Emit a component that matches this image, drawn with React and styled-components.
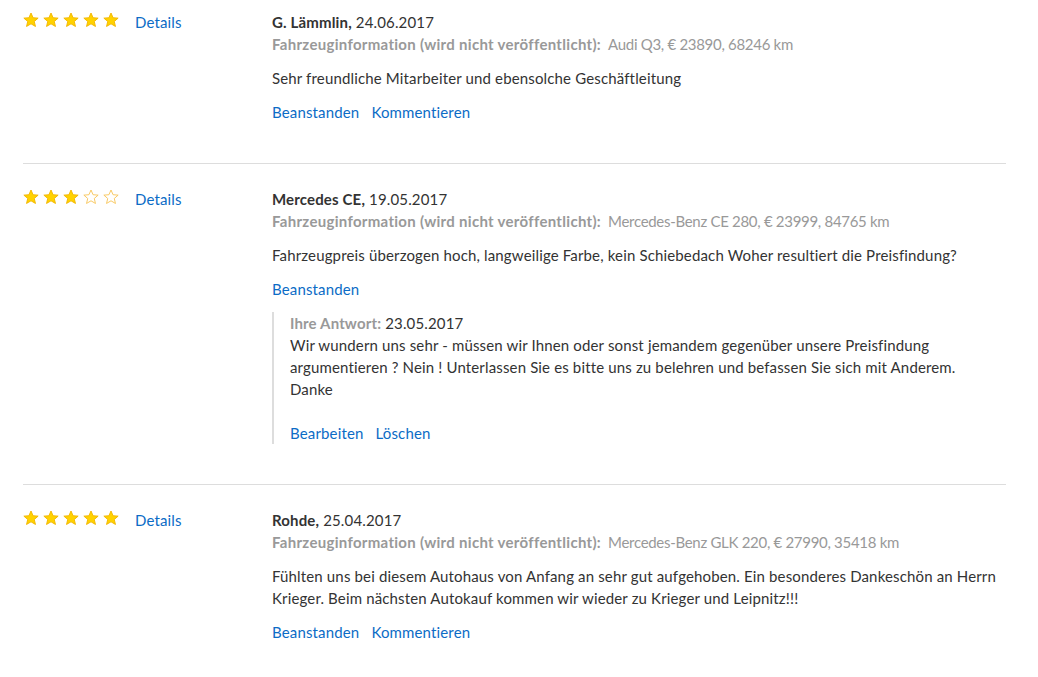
import React from 'react'
import styled, { createGlobalStyle } from 'styled-components'

const GlobalStyle = createGlobalStyle`
body {
    margin: 0;
    background: #fff;
    font-family: Lato, "Liberation Sans", sans-serif;
    color: #333;
}
`

const Page = styled.div`
padding: 11px 0 0 23px;
`

const Review = styled.div`
width: 983px;
display: grid;
grid-template-columns: 249px 1fr;
padding-bottom: 40px;
border-bottom: 1px solid #ddd;
font-size: 15px;
line-height: 22px;
letter-spacing: 0.15px;

& + & {
    padding-top: 24px;
}
`

const Side = styled.div`
display: flex;
align-items: flex-start;
`

const Stars = styled.div`
display: flex;
gap: 4px;
margin-top: 1px;
width: 96px;
`

const Link = styled.a`
color: #0c6cc6;
text-decoration: none;
cursor: pointer;
margin-right: ${({ gap }) => gap || 0}px;
`

const DetailsLink = styled(Link)`
margin-left: 16px;
`

const Main = styled.div`
display: flex;
flex-direction: column;
`

const Name = styled.div`
b { font-weight: 700; }
`

const Info = styled.div`
color: #999;
b { font-weight: 700; margin-right: 7px; letter-spacing: 0.3px; }
span { letter-spacing: -0.3px; }
`

const Text = styled.p`
margin: 12px 0;
`

const Actions = styled.div`
display: flex;
`

const Reply = styled.div`
margin-top: 12px;
border-left: 2px solid #ddd;
padding-left: 16px;
`

const ReplyHead = styled.div`
span { color: #999; font-weight: 700; }
`

const ReplyText = styled.div`
white-space: pre-line;
`

const ReplyActions = styled(Actions)`
margin-top: 22px;
`

const Star = ({ filled }) => (
    <svg width="16" height="16" viewBox="0 0 24 24">
        <path
            d="M12 1.5l3.1 7.1 7.6.6-5.8 5 1.8 7.5L12 17.7l-6.7 4 1.8-7.5-5.8-5 7.6-.6z"
            fill={filled ? '#ffd200' : '#fff'}
            stroke={filled ? '#f2b600' : '#f7c65a'}
            strokeWidth="1.4"
            strokeLinejoin="round"
        />
    </svg>
)

const reviews = [
    {
        rating: 5,
        name: 'G. Lämmlin',
        date: '24.06.2017',
        car: 'Audi Q3, € 23890, 68246 km',
        text: 'Sehr freundliche Mitarbeiter und ebensolche Geschäftleitung',
        comment: true,
    },
    {
        rating: 3,
        name: 'Mercedes CE',
        date: '19.05.2017',
        car: 'Mercedes-Benz CE 280, € 23999, 84765 km',
        text: 'Fahrzeugpreis überzogen hoch, langweilige Farbe, kein Schiebedach Woher resultiert die Preisfindung?',
        comment: false,
        reply: {
            date: '23.05.2017',
            text: 'Wir wundern uns sehr - müssen wir Ihnen oder sonst jemandem gegenüber unsere Preisfindung argumentieren ? Nein ! Unterlassen Sie es bitte uns zu belehren und befassen Sie sich mit Anderem.\nDanke',
        },
    },
    {
        rating: 5,
        name: 'Rohde',
        date: '25.04.2017',
        car: 'Mercedes-Benz GLK 220, € 27990, 35418 km',
        text: 'Fühlten uns bei diesem Autohaus von Anfang an sehr gut aufgehoben. Ein besonderes Dankeschön an Herrn Krieger. Beim nächsten Autokauf kommen wir wieder zu Krieger und Leipnitz!!!',
        comment: true,
    },
]

const App = () => {
    return (
        <Page>
            <GlobalStyle />
            {reviews.map((r) => (
                <Review key={r.name}>
                    <Side>
                        <Stars>
                            {[1, 2, 3, 4, 5].map((i) => (
                                <Star key={i} filled={i <= r.rating} />
                            ))}
                        </Stars>
                        <DetailsLink>Details</DetailsLink>
                    </Side>
                    <Main>
                        <Name><b>{r.name},</b> {r.date}</Name>
                        <Info><b>Fahrzeuginformation (wird nicht veröffentlicht):</b><span>{r.car}</span></Info>
                        <Text>{r.text}</Text>
                        <Actions>
                            <Link gap={12}>Beanstanden</Link>
                            {r.comment && <Link>Kommentieren</Link>}
                        </Actions>
                        {r.reply && (
                            <Reply>
                                <ReplyHead><span>Ihre Antwort:</span> {r.reply.date}</ReplyHead>
                                <ReplyText>{r.reply.text}</ReplyText>
                                <ReplyActions>
                                    <Link gap={12}>Bearbeiten</Link>
                                    <Link>Löschen</Link>
                                </ReplyActions>
                            </Reply>
                        )}
                    </Main>
                </Review>
            ))}
        </Page>
    )
}

export default App
